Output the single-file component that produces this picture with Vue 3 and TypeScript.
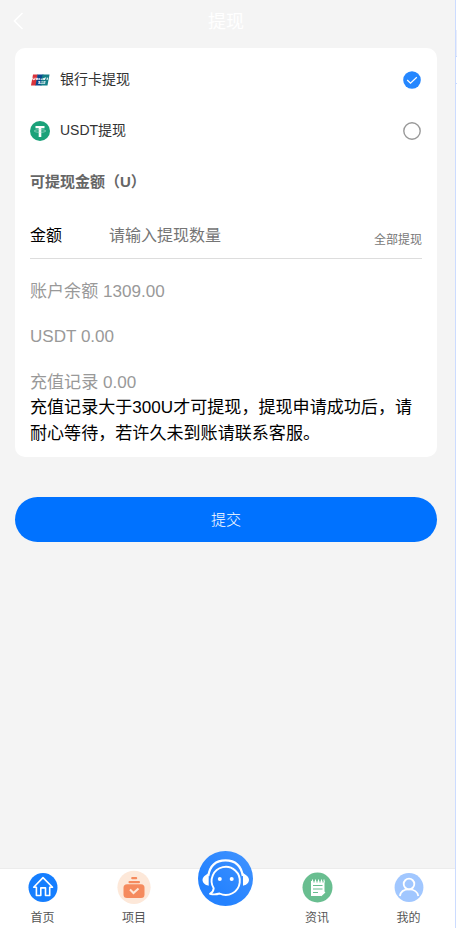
<script setup lang="ts">
import { ref } from 'vue'

type Method = 'bank' | 'usdt'
const method = ref<Method>('bank')
const amount = ref('')
const balances: { label: string; value: string }[] = [
  { label: '账户余额', value: '1309.00' },
  { label: 'USDT', value: '0.00' },
  { label: '充值记录', value: '0.00' },
]
</script>

<template>
  <div class="screen">
    <main class="page">
      <header class="header">
        <svg class="back" width="12" height="18" viewBox="0 0 12 18"><path d="M10.500 1 2.500 9l8 8" fill="none" stroke="#fff" stroke-width="1.600" /></svg>
        <h1>提现</h1>
      </header>

      <section class="card">
        <div class="method" @click="method = 'bank'">
          <svg class="logo" width="20" height="20" viewBox="0 0 20 20">
            <path d="M3 4.500h5L6 15.500H1z" fill="#d9343c" />
            <path d="M7.500 4.500h6l-2 11H5.500z" fill="#07498e" />
            <path d="M12.500 4.500H19.500L17.500 15.500H10.500z" fill="#147f87" />
            <path d="M2.800 7.700v1.700q1.400 1 2-.2l.3-1.500M6.300 10v-1.700h1.500V10M9.200 8v2M10.600 9.200h2M13.300 8v2M14.600 10V8h1.600M17.500 7.700l-.5 2.300" fill="none" stroke="#fff" stroke-width="1" />
            <path d="M8 11.800h2.500M11.300 11.800h1.900M13.800 11.800h2M8 13.300h7.200M9.500 11v2.600M14.200 11v2.600" fill="none" stroke="#dceaf0" stroke-width=".9" />
          </svg>
          <span class="method-name">银行卡提现</span>
          <svg v-if="method === 'bank'" width="18" height="18" viewBox="0 0 18 18"><circle cx="9" cy="9" r="8.800" fill="#2587ff" /><path d="m4.200 9 3.300 3.200L13.800 6.200" fill="none" stroke="#fff" stroke-width="1.200" /></svg>
          <svg v-else width="18" height="18" viewBox="0 0 18 18"><circle cx="9" cy="9" r="8.200" fill="#fff" stroke="#999" stroke-width="1.400" /></svg>
        </div>
        <div class="method" @click="method = 'usdt'">
          <svg class="logo" width="20" height="20" viewBox="0 0 20 20">
            <circle cx="10" cy="10" r="10" fill="#1ba27a" />
            <path d="M5.500 5h9v2.300h-3.200V16H8.700V7.300H5.500z" fill="#fff" />
            <ellipse cx="10" cy="10" rx="5.800" ry="1.300" fill="none" stroke="#b9e2d5" stroke-width=".6" />
          </svg>
          <span class="method-name">USDT提现</span>
          <svg v-if="method === 'usdt'" width="18" height="18" viewBox="0 0 18 18"><circle cx="9" cy="9" r="8.800" fill="#2587ff" /><path d="m4.200 9 3.300 3.200L13.800 6.200" fill="none" stroke="#fff" stroke-width="1.200" /></svg>
          <svg v-else width="18" height="18" viewBox="0 0 18 18"><circle cx="9" cy="9" r="8.200" fill="#fff" stroke="#999" stroke-width="1.400" /></svg>
        </div>
        <h2>可提现金额（U）</h2>
        <div class="amount">
          <label for="amount">金额</label>
          <input id="amount" v-model="amount" placeholder="请输入提现数量" />
          <span class="all">全部提现</span>
        </div>
        <div class="balances">
          <p v-for="b in balances" :key="b.label">{{ b.label }} {{ b.value }}</p>
        </div>
        <p class="note">充值记录大于300U才可提现，提现申请成功后，请耐心等待，若许久未到账请联系客服。</p>
      </section>

      <button class="submit">提交</button>

      <nav class="tabs">
        <a class="tab">
          <svg width="34" height="34" viewBox="0 0 34 34"><circle cx="17" cy="17.500" r="14.500" fill="#157eff" /><path d="M7.700 17.300 17 7.600l9.500 9.700h-2.800v8.200h-4.200v-7.600h-4.700v7.600h-4.400v-8.200z" fill="none" stroke="#fff" stroke-width="1.600" stroke-linejoin="round" /></svg>
          <span>首页</span>
        </a>
        <a class="tab">
          <svg width="34" height="34" viewBox="0 0 34 34"><circle cx="17" cy="17.300" r="16.600" fill="#fde8d9" /><g fill="#f58a5d"><rect x="14.200" y="7" width="6" height="2.300" rx="1" /><rect x="11.500" y="11" width="11.500" height="2.200" rx="1" /><rect x="6.500" y="14.300" width="21" height="13.800" rx="3.500" /></g><path d="m13 19.500 3.500 3.500 5-4.500" fill="none" stroke="#fde8d9" stroke-width="2" /></svg>
          <span>项目</span>
        </a>
        <a class="service">
          <svg width="55" height="55" viewBox="0 0 55 55">
            <defs><linearGradient id="service-blue" x1="1" y1="0" x2="0.300" y2="0.700"><stop stop-color="#4294ff" /><stop offset="1" stop-color="#2482ff" /></linearGradient></defs>
            <circle cx="27.500" cy="27.500" r="27.500" fill="url(#service-blue)" />
            <path d="M10.300 25C12 14 18.500 9.400 27.500 9.400S43 14 44.800 25" fill="none" stroke="#fff" stroke-width="2.200" />
            <path d="M10.700 22v12.700C6.800 34.200 4.500 31.500 4.500 28.800s2.400-4.500 6.200-6.800zM45 22v12.700c3.800-.5 6-3.200 6-5.900s-2.200-4.500-6-6.800z" fill="#fff" />
            <path d="M15.700 37.200A14.100 14.100 0 1 1 21.500 42.500Q17 44 12 42.800q3.500-2 3.700-5.600z" fill="none" stroke="#fff" stroke-width="1.900" stroke-linejoin="round" />
            <circle cx="21.800" cy="28" r="2" fill="#fff" /><circle cx="33.700" cy="28" r="2" fill="#fff" />
          </svg>
        </a>
        <a class="tab">
          <svg width="34" height="34" viewBox="0 0 34 34"><circle cx="17.500" cy="17.500" r="15" fill="#69be90" /><path d="M11 11h13.500v11.500l-4 3.500H11z" fill="#fff" /><path d="M12.500 9.500v3M15.500 9.500v3M18.500 9.500v3M21.500 9.500v3M24 9.500v3" stroke="#fff" stroke-width="1.100" /><path d="M14 11v1.500M17 11v1.500M20 11v1.500M23 11v1.500M13 15.500h9.500M13 19h9.500M13 22.500h5" fill="none" stroke="#69be90" stroke-width="1.100" /><path d="m19.500 24 1.800 1.500 3.700-3.500" fill="none" stroke="#fff" stroke-width="1.200" /></svg>
          <span>资讯</span>
        </a>
        <a class="tab">
          <svg width="34" height="34" viewBox="0 0 34 34"><circle cx="17" cy="17.500" r="14.400" fill="#a1c7ff" /><circle cx="17" cy="14" r="5.300" fill="none" stroke="#fff" stroke-width="1.800" /><path d="M7.900 26C8.500 22 12 19.300 17 19.300s8.700 2.700 9.300 6.700" fill="none" stroke="#fff" stroke-width="1.800" /></svg>
          <span>我的</span>
        </a>
      </nav>
    </main>
    <aside class="edge"><div class="edge-tab"></div><div class="edge-cell"></div></aside>
  </div>
</template>

<style>
body { margin: 0; overflow: hidden; }
</style>

<style scoped>
* { box-sizing: border-box; }
.screen {
  display: flex;
  width: 457px;
  height: 928px;
  font-family: "Liberation Sans", "Noto Sans CJK SC", sans-serif;
  font-weight: 400;
}
.page { display: flex; flex-direction: column; width: 455px; background: #f4f4f4; }
.header { display: grid; grid-template-columns: 40px 1fr 40px; align-items: center; width: 452px; height: 42px; }
.back { margin-left: 12px; }
h1 { margin: 0; padding-top: 1px; text-align: center; font-size: 18px; line-height: 26px; font-weight: 400; color: #fff; }
.card { width: 422px; height: 409px; margin: 6px 0 0 15px; padding: 6px 15px 0; border-radius: 10px; background: #fff; }
.method { display: flex; align-items: center; height: 51px; padding-right: 1px; font-size: 14px; color: #333; }
.method-name { flex: 1; margin-left: 10px; line-height: 20px; margin-bottom: 1px; }
h2 { margin: 0; height: 51px; font-size: 15px; line-height: 51px; color: #666; font-weight: 700; }
.amount { display: flex; align-items: center; height: 52px; padding-top: 7px; border-bottom: 1px solid #ddd; font-size: 16px; }
.amount label { width: 79px; line-height: 24px; color: #000; }
.amount input { flex: 1; min-width: 0; height: 24px; padding: 0; border: 0; outline: 0; background: none; font: inherit; }
.amount input::placeholder { color: #757575; opacity: 1; }
.all { padding-top: 8px; font-size: 12px; line-height: 17px; color: #777; }
.balances { display: grid; gap: 19.250px; padding-top: 20px; font-size: 17.070px; line-height: 26px; color: #999; }
.balances p, .note { margin: 0; }
.note { width: 392px; margin-top: -0.500px; font-size: 17.070px; line-height: 25.600px; color: #000; }
.submit { width: 422px; height: 45px; margin: 40px 0 0 15px; padding: 0 0 2px; border: 0; border-radius: 23px; background: #0072ff; color: #fff; font: inherit; font-size: 15px; font-weight: 300; }
.tabs { display: flex; justify-content: space-between; height: 60px; margin-top: auto; padding: 0 24px 0 20px; border-top: 1px solid #ececec; background: #fff; }
.tab { display: flex; flex-direction: column; align-items: center; width: 45px; padding-top: 1px; font-size: 12px; line-height: 18px; color: #555; }
.tab span { margin-top: 5px; }
.service { width: 55px; margin: -18px -5px 0; }
.service svg { display: block; }
.edge { width: 2px; border-left: 1px solid #ccdcff; background: #fff; padding-top: 30px; }
.edge-tab { height: 27px; background: #e9edfa; border-bottom: 1px solid #c8d9ff; }
.edge-cell { height: 27px; border-bottom: 1px solid #c8d9ff; }
</style>
